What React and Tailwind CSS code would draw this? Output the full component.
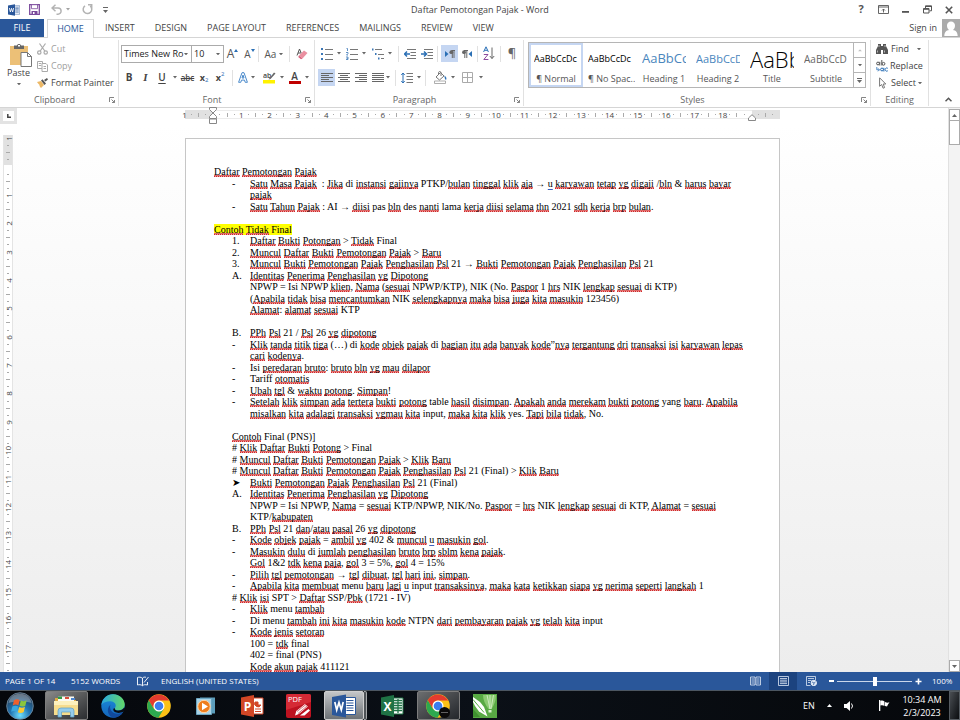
import { Fragment, useState } from 'react';

const TABS = ['INSERT', 'DESIGN', 'PAGE LAYOUT', 'REFERENCES', 'MAILINGS', 'REVIEW', 'VIEW'];

const STYLES = [
    { name: '¶ Normal', sample: 'AaBbCcDc', look: 'text-[9px] text-black' },
    { name: '¶ No Spac...', sample: 'AaBbCcDc', look: 'text-[9px] text-black' },
    { name: 'Heading 1', sample: 'AaBbCc', look: 'text-[13px] text-[#4a86bd]' },
    { name: 'Heading 2', sample: 'AaBbCcD', look: 'text-[11px] text-[#4a86bd]' },
    { name: 'Title', sample: 'AaBb', look: 'text-[22px] text-black font-light' },
    { name: 'Subtitle', sample: 'AaBbCcD', look: 'text-[10px] text-[#666]' },
];

// [marker, text] - marker null means plain text on the margin, '' means a continuation line
const LINES = [
    [null, 'Daftar Pemotongan Pajak'],
    ['-', 'Satu Masa Pajak  : Jika di instansi gajinya PTKP/bulan tinggal klik aja → u karyawan tetap yg digaji /bln & harus bayar'],
    ['', 'pajak'],
    ['-', 'Satu Tahun Pajak : AI → diisi pas bln des nanti lama kerja diisi selama thn 2021 sdh kerja brp bulan.'],
    [null, ''],
    ['mark', 'Contoh Tidak Final'],
    ['1.', 'Daftar Bukti Potongan > Tidak Final'],
    ['2.', 'Muncul Daftar Bukti Pemotongan Pajak > Baru'],
    ['3.', 'Muncul Bukti Pemotongan Pajak Penghasilan Psl 21 → Bukti Pemotongan Pajak Penghasilan Psl 21'],
    ['A.', 'Identitas Penerima Penghasilan yg Dipotong'],
    ['', 'NPWP = Isi NPWP klien, Nama (sesuai NPWP/KTP), NIK (No. Paspor 1 hrs NIK lengkap sesuai di KTP)'],
    ['', '(Apabila tidak bisa mencantumkan NIK selengkapnya maka bisa juga kita masukin 123456)'],
    ['', 'Alamat: alamat sesuai KTP'],
    [null, ''],
    ['B.', 'PPh Psl 21 / Psl 26 yg dipotong'],
    ['-', 'Klik tanda titik tiga (…) di kode objek pajak di bagian itu ada banyak kode”nya tergantung dri transaksi isi karyawan lepas'],
    ['', 'cari kodenya.'],
    ['-', 'Isi peredaran bruto: bruto bln yg mau dilapor'],
    ['-', 'Tariff otomatis'],
    ['-', 'Ubah tgl & waktu potong. Simpan!'],
    ['-', 'Setelah klik simpan ada tertera bukti potong table hasil disimpan. Apakah anda merekam bukti potong yang baru. Apabila'],
    ['', 'misalkan kita adalagi transaksi ygmau kita input, maka kita klik yes. Tapi bila tidak, No.'],
    [null, ''],
    ['#', 'Contoh Final (PNS)]'],
    ['#', '# Klik Daftar Bukti Potong > Final'],
    ['#', '# Muncul Daftar Bukti Pemotongan Pajak > Klik Baru'],
    ['#', '# Muncul Daftar Bukti Pemotongan Pajak Penghasilan Psl 21 (Final) > Klik Baru'],
    ['➤', 'Bukti Pemotongan Pajak Penghasilan Psl 21 (Final)'],
    ['A.', 'Identitas Penerima Penghasilan yg Dipotong'],
    ['', 'NPWP = Isi NPWP, Nama = sesuai KTP/NPWP, NIK/No. Paspor = hrs NIK lengkap sesuai di KTP, Alamat = sesuai'],
    ['', 'KTP/kabupaten'],
    ['B.', 'PPh Psl 21 dan/atau pasal 26 yg dipotong'],
    ['-', 'Kode objek pajak = ambil yg 402 & muncul u masukin gol.'],
    ['-', 'Masukin dulu di jumlah penghasilan bruto brp sblm kena pajak.'],
    ['', 'Gol 1&2 tdk kena paja, gol 3 = 5%, gol 4 = 15%'],
    ['-', 'Pilih tgl pemotongan → tgl dibuat, tgl hari ini, simpan.'],
    ['-', 'Apabila kita membuat menu baru lagi u input transaksinya, maka kata ketikkan siapa yg nerima seperti langkah 1'],
    ['#', '# Klik isi SPT > Daftar SSP/Pbk (1721 - IV)'],
    ['-', 'Klik menu tambah'],
    ['-', 'Di menu tambah ini kita masukin kode NTPN dari pembayaran pajak yg telah kita input'],
    ['-', 'Kode jenis setoran'],
    ['', '100 = tdk final'],
    ['', '402 = final (PNS)'],
    ['', 'Kode akun pajak 411121'],
];

// words the proofing dictionary accepts
const KNOWN = new Set(['di', 'Di', 'PTKP', 'AI', 'pas', 'des', 'lama', 'Final', 'final', 'NPWP', 'KTP', 'NIK', 'No', 'Isi', 'Tariff', 'table', 'yang', 'input', 'yes', 'PNS', 'menu', 'SPT', 'SSP', 'IV', 'NTPN']);

function Proofed({ text }) {
    return text.split(/([A-Za-z]+)/).map((part, i) => {
        if (i % 2 === 0 || KNOWN.has(part)) return <Fragment key={i}>{part}</Fragment>;
        if (part === 'u') return <span key={i} className="underline decoration-[#3a5fc0] underline-offset-2">u</span>;
        return (
            <span key={i} className="bg-[repeating-linear-gradient(90deg,#d02828_0px,#d02828_1px,#eba0a0_1px,#eba0a0_2px),linear-gradient(#de6464,#de6464)] bg-[length:100%_1px,100%_1px] bg-[position:0_100%,0_calc(100%-1px)] bg-no-repeat">{part}</span>
        );
    });
}

function Line({ marker, text }) {
    if (marker === 'mark') {
        return <p className="even:pt-px"><mark className="bg-[#ffff00] text-black"><Proofed text={text} /></mark></p>;
    }
    if (marker === null) return <p className="min-h-[11px] even:min-h-3 even:pt-px"><Proofed text={text} /></p>;
    if (marker === '#') return <p className="pl-[18px] even:pt-px"><Proofed text={text} /></p>;
    return (
        <p className="flex pl-[18px] even:pt-px">
            <span className="w-[18px] shrink-0">{marker}</span>
            <span><Proofed text={text} /></span>
        </p>
    );
}

function Caret({ className = 'w-[5px]' }) {
    return (
        <svg viewBox="0 0 5 3" className={`shrink-0 ${className}`} fill="#666"><path d="M0 0h5L2.500 3z" /></svg>
    );
}

function Sep() {
    return <span className="h-4 w-px shrink-0 bg-[#e1e1e1]" />;
}

function Tool({ label, w = 'w-[17px]', active, children }) {
    return (
        <button type="button" aria-label={label} className={`flex h-[17px] shrink-0 items-center justify-center ${w} ${active ? 'bg-[#c5d6f2]' : 'hover:bg-[#e3ecf9]'}`}>
            {children}
        </button>
    );
}

function Rows({ rows, color = '#666' }) {
    return (
        <svg viewBox="0 0 12 11" className="h-[11px] w-3" stroke={color} strokeWidth="1">
            {rows.map(([a, b], i) => <path key={i} d={`M${a} ${i * 2 + 1.5}H${b}`} />)}
        </svg>
    );
}

function Group({ title, launcher = true, className, children }) {
    return (
        <section className={`flex shrink-0 flex-col border-r border-[#e1e1e1] ${className}`}>
            <div className="flex-1">{children}</div>
            <div className="flex h-[13px] items-center">
                <span className="flex-1 text-center text-[#666]">{title}</span>
                {launcher && (
                    <button type="button" aria-label={`${title} options`} className="mr-[3px] w-[6px]">
                        <svg viewBox="0 0 6 6" className="size-[6px]" fill="none" stroke="#777"><path d="M.5 5V.5H5M2.500 2.500l3 3M5.500 3v2.500H3" strokeWidth=".9" /></svg>
                    </button>
                )}
            </div>
        </section>
    );
}

function TitleBar() {
    return (
        <header className="flex h-[19px] items-center bg-white">
            <div className="flex w-40 items-center pl-2">
                <WordLogo className="size-3" />
                <button type="button" aria-label="Save" className="ml-[9px]">
                    <svg viewBox="0 0 11 11" className="size-[11px]"><path d="M.7.7h9.600v9.600H.7z" fill="#fff" stroke="#7b4a9c" strokeWidth="1.300" /><path d="M2.500.7h6v4h-6z" fill="#fff" stroke="#7b4a9c" strokeWidth=".8" /><path d="M2.500 7h6v3.500h-6z" fill="#7b4a9c" /><path d="M4 8h1.500v2H4z" fill="#fff" /></svg>
                </button>
                <button type="button" aria-label="Undo" className="ml-[11px] flex items-center gap-1">
                    <svg viewBox="0 0 11 11" className="size-[11px]" fill="none" stroke="#b3b3b3" strokeWidth="1.500"><path d="M4.500.8L1 4l3.500 3.200M1.200 4H7a3 3 0 0 1 0 6.200H5.500" /></svg>
                    <Caret className="w-1 opacity-60" />
                </button>
                <button type="button" aria-label="Redo" className="ml-3">
                    <svg viewBox="0 0 11 11" className="size-[11px]" fill="none" stroke="#b3b3b3" strokeWidth="1.500"><path d="M3 1.800A4.300 4.300 0 1 0 8.200 2M6 .8h3.700v3.700" /></svg>
                </button>
                <button type="button" aria-label="Customize Quick Access Toolbar" className="ml-[10px]">
                    <svg viewBox="0 0 5 6" className="h-[6px] w-[5px]" fill="#666"><path d="M0 0h5v1H0zM0 3h5L2.500 6z" /></svg>
                </button>
            </div>
            <h1 className="flex-1 pt-px text-center text-[9px]">Daftar Pemotongan Pajak - Word</h1>
            <div className="flex w-40 justify-end text-[#555]">
                <button type="button" aria-label="Help" className="w-[22px] text-[11px] font-bold">?</button>
                <button type="button" aria-label="Ribbon Display Options" className="flex w-[22px] items-center justify-center">
                    <svg viewBox="0 0 11 9" className="h-[9px] w-[11px]" fill="none" stroke="#555"><path d="M.5.5h10v8H.5zM.5 2h10M5.500 7.500V4M4 5.500L5.500 4 7 5.500" strokeWidth=".9" /></svg>
                </button>
                <button type="button" aria-label="Minimize" className="flex w-[22px] items-center justify-center">
                    <svg viewBox="0 0 8 8" className="size-2" fill="#555"><path d="M1 5h7v1.800H1z" /></svg>
                </button>
                <button type="button" aria-label="Restore" className="flex w-[22px] items-center justify-center">
                    <svg viewBox="0 0 9 9" className="size-[9px]" fill="none" stroke="#555"><path d="M.5 3.500h5.500v4.500H.5zM.5 4.300H6M2.500 3V.8h6v5H6.500M2.500 1.500h6" /></svg>
                </button>
                <button type="button" aria-label="Close" className="flex w-[22px] items-center justify-center">
                    <svg viewBox="0 0 8 8" className="size-2" stroke="#555" strokeWidth="1.600"><path d="M.8.8l6.400 6.400M7.200.8L.8 7.200" /></svg>
                </button>
            </div>
        </header>
    );
}

function TabBar() {
    return (
        <nav className="flex h-[19px] items-stretch border-b border-[#d5d5d5] bg-white text-[9px]">
            <button type="button" className="w-11 bg-[#2a579a] text-white">FILE</button>
            <button type="button" className="-mb-px ml-[3px] mr-px w-[47px] border border-b-0 border-[#d5d5d5] bg-white text-[#2a579a]">HOME</button>
            {TABS.map(tab => (
                <button key={tab} type="button" className="px-[10px] hover:text-[#2a579a]">{tab}</button>
            ))}
            <a href="#signin" className="ml-auto flex items-center gap-[5px]">
                Sign in
                <svg viewBox="0 0 18 18" className="size-[18px]"><path d="M0 0h18v18H0z" fill="#ababab" /><path d="M9 2.500a4 4 0 0 1 4 4.200c0 2-1.200 3.800-2.200 4.300 3.200.4 4.700 2 4.900 6H2.300c.2-4 1.700-5.600 4.900-6C6.200 10.500 5 8.700 5 6.700A4 4 0 0 1 9 2.500z" fill="#fff" /></svg>
            </a>
        </nav>
    );
}

function Clipboard() {
    return (
        <Group title="Clipboard" className="w-[119px]">
            <div className="flex pt-[3px]">
                <button type="button" className="flex w-[37px] flex-col items-center">
                    <svg viewBox="0 0 22 24" className="ml-1 h-6 w-[22px]">
                        <path d="M0 3h18v19H0z" fill="#ecc077" /><path d="M4 2.500h3C7.300.5 10.700.5 11 2.500h3V6H4z" fill="#666" /><path d="M8 2h2v1.500H8z" fill="#fff" />
                        <path d="M11 9.500h6.500l4 4V23.500H11z" fill="#fff" stroke="#777" /><path d="M17.500 9.500v4h4" fill="none" stroke="#777" />
                    </svg>
                    <span className="leading-3">Paste</span>
                    <span className="flex h-[10px] items-center"><Caret className="w-1" /></span>
                </button>
                <div className="flex flex-col gap-[5px] text-[#444]">
                    <button type="button" className="flex h-3 items-center gap-[3px] text-[#a0a0a0]">
                        <svg viewBox="0 0 11 12" className="h-3 w-[11px]" fill="none" stroke="#aaa" strokeWidth="1.200"><path d="M2.500.5L7.800 8M8.500.5L3.200 8" /><circle cx="2.300" cy="9.500" r="1.700" /><circle cx="8.700" cy="9.500" r="1.700" /></svg>
                        Cut
                    </button>
                    <button type="button" className="flex h-3 items-center gap-[3px] text-[#a0a0a0]">
                        <svg viewBox="0 0 11 11" className="size-[11px]" fill="#fff" stroke="#aaa"><path d="M.5.500h5v7h-5zM1.800 2.500h2.500M1.800 4.500h2.500" /><path d="M5 2.500h4l1.500 1.500v6.500H5zM6.500 5.500h2.500M6.500 7.500h2.500" /></svg>
                        Copy
                    </button>
                    <button type="button" className="flex h-3 items-center gap-[3px]">
                        <svg viewBox="0 0 11 10" className="h-[10px] w-[11px]"><path d="M0 4l4-1 3 4-3 3c-1-1-1.500-2-1.800-3.500L1.500 6z" fill="#ecb866" /><path d="M4 2.500l1.500-1.200L9 5.500 7.500 7zM7 2l3-2 1 1.500-2.500 2z" fill="#555" /></svg>
                        Format Painter
                    </button>
                </div>
            </div>
        </Group>
    );
}

function Combo({ label, value, options, onChange, w }) {
    return (
        <label className={`relative flex h-[18px] items-center border border-[#ababab] ${w}`}>
            <select aria-label={label} value={value} onChange={e => onChange(e.target.value)} className="h-full w-full appearance-none bg-white pl-[2px] text-[9px] text-[#222] outline-none">
                {options.map(o => <option key={o}>{o}</option>)}
            </select>
            <span className="pointer-events-none absolute right-[3px]"><Caret className="w-1" /></span>
        </label>
    );
}

function FontGroup() {
    const [font, setFont] = useState('Times New Ro');
    const [size, setSize] = useState('10');

    return (
        <Group title="Font" className="w-[196px]">
            <div className="flex items-center pl-[2px] pt-[5px]">
                <Combo label="Font" w="w-[71px]" value={font} options={['Times New Ro', 'Calibri', 'Arial']} onChange={setFont} />
                <Combo label="Font size" w="-ml-px w-[33px]" value={size} options={['8', '9', '10', '11', '12']} onChange={setSize} />
                <Tool label="Grow font"><span className="text-[12px] text-[#555]">A</span><svg viewBox="0 0 4 3" className="mb-2 w-1" fill="#2a6fb5"><path d="M0 3h4L2 0z" /></svg></Tool>
                <Tool label="Shrink font"><span className="text-[10px] text-[#555]">A</span><svg viewBox="0 0 4 3" className="mb-2 w-1" fill="#2a6fb5"><path d="M0 0h4L2 3z" /></svg></Tool>
                <Sep />
                <Tool label="Change case" w="w-[30px]"><span className="mr-[3px] text-[10px] text-[#555]">Aa</span><Caret className="w-1" /></Tool>
                <Sep />
                <Tool label="Clear formatting" w="w-6">
                    <svg viewBox="0 0 12 12" className="size-3"><path d="M1 7.500L3.500 1l1.700 4M2 5h3" fill="none" stroke="#555" /><path d="M3 7.500L8 2.500l3.500 2.500-5 5.500z" fill="#ea8fa0" /><path d="M3 7.500l3.500 3-1.500.7L2.200 9z" fill="#d6607a" /></svg>
                </Tool>
            </div>
            <div className="flex items-center pl-[2px] pt-[6px] text-[#444]">
                <Tool label="Bold" w="w-4"><b className="text-[10px]">B</b></Tool>
                <Tool label="Italic"><i className="font-['Liberation_Serif',serif] text-[11px] font-bold">I</i></Tool>
                <Tool label="Underline" w="w-4"><span className="text-[10px] font-semibold underline underline-offset-2">U</span></Tool>
                <Tool label="Underline style" w="w-[9px]"><Caret className="w-1" /></Tool>
                <Tool label="Strikethrough"><span className="text-[8px] font-semibold line-through">abc</span></Tool>
                <Tool label="Subscript" w="w-4"><b className="text-[9px]">x</b><span className="mt-[6px] text-[6px] text-[#2a6fb5]">2</span></Tool>
                <Tool label="Superscript" w="w-4"><b className="text-[9px]">x</b><span className="mb-[6px] text-[6px] text-[#2a6fb5]">2</span></Tool>
                <span className="w-1" />
                <Sep />
                <Tool label="Text effects" w="w-[27px]">
                    <svg viewBox="0 0 10 11" className="mr-[3px] h-[11px] w-[10px]" fill="#fff" stroke="#4a8acb" strokeWidth="1"><path d="M.6 10.300L4 .7h2l3.400 9.600H7.200l-.7-2.200h-3l-.7 2.200zM4 6h2L5 3z" /></svg>
                    <Caret className="w-1" />
                </Tool>
                <Tool label="Highlight" w="w-[26px]">
                    <svg viewBox="0 0 13 13" className="mr-1 size-[13px]"><path d="M0 9h12v3.500H0z" fill="#fff200" /><text x="0" y="7" fontSize="7" fontWeight="600" fill="#444">ab</text><path d="M5.500 8.500L11 1.500l1.500 1L7.500 8z" fill="#666" /></svg>
                    <Caret className="w-1" />
                </Tool>
                <Tool label="Font color" w="w-[25px]">
                    <span className="mr-1 w-3 border-b-[3px] border-[#c00000] text-center text-[10px] font-semibold leading-[10px]">A</span>
                    <Caret className="w-1" />
                </Tool>
            </div>
        </Group>
    );
}

function ListIcon({ kind }) {
    return (
        <svg viewBox="0 0 12 12" className="mr-1 size-3" strokeWidth="1">
            {kind === 'bullet' && <path d="M0 0h2v2H0zM0 5h2v2H0zM0 10h2v2H0z" fill="#3b77b7" />}
            {kind === 'number' && <path d="M.5.500H1.500V3M0 4.500h2v1L.5 7H2M0 9h2v2.500H0M.5 10.300H2" fill="none" stroke="#3b77b7" strokeWidth=".8" />}
            {kind === 'multi' ? (
                <><path d="M0 1.500h1.500M3 6h1.500M6 10.500h1.500" stroke="#3b77b7" strokeWidth="2" /><path d="M3 1.500h7M6 6.500h6M9 10.500h3" stroke="#777" /></>
            ) : (
                <path d="M4 1.500h8M4 6.500h8M4 11.500h8" stroke="#777" />
            )}
        </svg>
    );
}

function IndentIcon({ flip }) {
    return (
        <svg viewBox="0 0 12 10" className="h-[10px] w-3" fill="none">
            <path d="M3 .5h9M6.500 3.500H12M6.500 6.500H12M3 9.500h9" stroke="#777" />
            <path d={flip ? 'M0 5h5M3 2.500L5.500 5 3 7.500' : 'M1 5h5M3 2.500L.5 5 3 7.500'} stroke="#2a6fb5" strokeWidth="1.500" />
        </svg>
    );
}

function ParagraphGroup() {
    return (
        <Group title="Paragraph" className="w-[209px]">
            <div className="flex items-center pl-[3px] pt-[5px]">
                <Tool label="Bullets" w="w-[25px]"><ListIcon kind="bullet" /><Caret className="w-1" /></Tool>
                <Tool label="Numbering" w="w-[26px]"><ListIcon kind="number" /><Caret className="w-1" /></Tool>
                <Tool label="Multilevel list" w="w-[25px]"><ListIcon kind="multi" /><Caret className="w-1" /></Tool>
                <span className="w-1" />
                <Sep />
                <span className="w-[2px]" />
                <Tool label="Decrease indent"><IndentIcon /></Tool>
                <Tool label="Increase indent"><IndentIcon flip /></Tool>
                <span className="w-[2px]" />
                <Sep />
                <span className="w-[3px]" />
                <Tool label="Left-to-right" active><svg viewBox="0 0 10 8" className="h-2 w-[10px]"><path d="M0 1l3.500 3L0 7z" fill="#2a6fb5" /><path d="M6.500.5H10M7.300 0v8M9 0v8" stroke="#666" /><circle cx="6.300" cy="2.200" r="1.900" fill="#666" /></svg></Tool>
                <Tool label="Right-to-left"><svg viewBox="0 0 10 8" className="h-2 w-[10px]"><path d="M10 1L6.500 4 10 7z" fill="#2a6fb5" /><path d="M2 .5h4M2.800 0v8M4.800 0v8" stroke="#666" /><circle cx="2" cy="2.200" r="1.900" fill="#666" /></svg></Tool>
                <span className="w-[2px]" />
                <Sep />
                <Tool label="Sort" w="w-[22px]">
                    <svg viewBox="0 0 12 15" className="h-[15px] w-3" fill="none">
                        <path d="M.6 6L3 .8 5.400 6M1.500 4.300h3" stroke="#2a6fb5" />
                        <path d="M.8 8.500h4.200L.8 13.500H5.400" stroke="#8b4a9c" />
                        <path d="M9 1.500v11M6.800 10L9 12.500l2.200-2.500" stroke="#666" />
                    </svg>
                </Tool>
                <Sep />
                <Tool label="Show paragraph marks" w="w-[22px]"><span className="text-[13px] text-[#666]">¶</span></Tool>
            </div>
            <div className="flex items-center pl-[3px] pt-[7px]">
                <Tool label="Align left" active><Rows rows={[[0, 12], [0, 8], [0, 12], [0, 8], [0, 12]]} /></Tool>
                <Tool label="Center"><Rows rows={[[0, 12], [2, 10], [0, 12], [2, 10], [0, 12]]} /></Tool>
                <Tool label="Align right"><Rows rows={[[0, 12], [4, 12], [0, 12], [4, 12], [0, 12]]} /></Tool>
                <Tool label="Justify"><Rows rows={[[0, 12], [0, 12], [0, 12], [0, 12], [0, 12]]} /></Tool>
                <Caret className="w-1" />
                <span className="w-[5px]" />
                <Sep />
                <Tool label="Line spacing" w="w-[29px]">
                    <svg viewBox="0 0 12 12" className="mr-1 size-3" fill="none"><path d="M5.500 1.500H12M5.500 4.500H12M5.500 7.500H12M5.500 10.500H12" stroke="#777" /><path d="M2 1v10M.3 3L2 1l1.700 2M.3 9L2 11l1.700-2" stroke="#2a6fb5" /></svg>
                    <Caret className="w-1" />
                </Tool>
                <Sep />
                <span className="w-[3px]" />
                <Tool label="Shading" w="w-[31px]">
                    <svg viewBox="0 0 13 13" className="mr-1 size-[13px]" fill="none"><path d="M2 6l4.500-4.500L10 5 5.500 9z" fill="#fff" stroke="#777" /><path d="M4.500 4V1.500a1.300 1.300 0 0 1 2.500 0V5" stroke="#777" /><path d="M10.500 4.500c2 1.500 2.300 3 1.500 4.500-1-.5-1.500-2-1.500-4.500z" fill="#2a6fb5" /><path d="M.5 10h11v2.500H.5z" fill="#fff" stroke="#999" strokeWidth=".8" /></svg>
                    <Caret className="w-1" />
                </Tool>
                <Tool label="Borders" w="w-6">
                    <svg viewBox="0 0 11 11" className="mr-[6px] size-[11px]" fill="none" stroke="#aaa"><path d="M.5.500h10v10H.5zM5.500.5v10M.5 5.500h10" /></svg>
                    <Caret className="w-1" />
                </Tool>
            </div>
        </Group>
    );
}

function StylesGroup() {
    return (
        <Group title="Styles" className="w-[347px]">
            <div className="ml-1 mr-[4px] mt-[2px] flex h-[46px] border border-[#b5b5b5]">
                {STYLES.map((s, i) => (
                    <button key={s.name} type="button" className={`flex min-w-0 flex-1 flex-col overflow-hidden border-2 px-[3px] ${i === 0 ? 'border-[#c5d6f2]' : 'border-transparent'}`}>
                        <span className={`flex h-7 w-full items-center overflow-hidden whitespace-nowrap ${s.look}`}>{s.sample}</span>
                        <span className="w-full whitespace-nowrap text-center leading-[11px] text-[#555]">{s.name}</span>
                    </button>
                ))}
                <div className="flex w-[12px] flex-col divide-y divide-[#b5b5b5] border-l border-[#b5b5b5]">
                    <button type="button" aria-label="Previous styles" className="flex flex-1 items-center justify-center"><Caret className="w-1 rotate-180 opacity-40" /></button>
                    <button type="button" aria-label="Next styles" className="flex flex-1 items-center justify-center"><Caret className="w-1" /></button>
                    <button type="button" aria-label="More styles" className="flex flex-1 flex-col items-center justify-center gap-px"><span className="h-px w-[5px] bg-[#666]" /><Caret className="w-[5px]" /></button>
                </div>
            </div>
        </Group>
    );
}

function EditingGroup() {
    return (
        <Group title="Editing" launcher={false} className="w-[58px]">
            <div className="flex flex-col gap-[5px] pl-[5px] pt-[3px]">
                <button type="button" className="flex h-3 items-center gap-[3px]">
                    <svg viewBox="0 0 12 10" className="h-[10px] w-3" fill="#555"><path d="M2 0h3v2h2V0h3v2l2 4v4H7V6H5v4H0V6l2-4z" /><path d="M1.500 6.500v2M8.500 6.500v2M3 1v2M9 1v2" stroke="#ddd" strokeWidth=".7" /></svg>
                    Find
                    <span className="ml-[5px]"><Caret className="w-1" /></span>
                </button>
                <button type="button" className="flex h-3 items-center gap-[2px]">
                    <svg viewBox="0 0 12 12" className="size-3" fill="none">
                        <g stroke="#555"><circle cx="2" cy="3.500" r="1.400" /><path d="M3.800 1.800v3.700M5.800 0v5.500" /><circle cx="7.500" cy="3.800" r="1.400" /></g>
                        <g stroke="#2a6fb5"><circle cx="6" cy="9.500" r="1.400" /><path d="M7.900 7.800v3.700M11.800 8.300a1.600 1.600 0 1 0 0 2.500" /><path d="M.8 7v2.800h2.500M2 8.300l1.500 1.500L2 11.300" strokeWidth=".8" /></g>
                    </svg>
                    Replace
                </button>
                <button type="button" className="flex h-3 items-center gap-[4px] pl-[3px]">
                    <svg viewBox="0 0 8 12" className="h-3 w-2" fill="#fff" stroke="#777"><path d="M.6.8v8.500l2-1.800 1.500 3.700 1.500-.6L4.200 7h2.600z" /></svg>
                    <span className="flex items-center gap-[2px]">Select<Caret className="w-1" /></span>
                </button>
            </div>
        </Group>
    );
}

// one centimetre: the number and three ticks
function Centimetre({ label, vertical }) {
    return (
        <div className={`flex min-h-0 min-w-0 flex-1 ${vertical ? 'flex-col' : ''}`}>
            <span className="flex min-h-0 min-w-0 flex-1 items-center justify-center whitespace-nowrap">
                <span className={vertical ? '-rotate-90' : ''}>{label}</span>
            </span>
            {['short', 'long', 'dot'].map((tick, i) => (
                <span key={tick} className="flex min-h-0 flex-1 items-center justify-center">
                    <i className={`bg-[#aaa] ${vertical ? (i === 1 ? 'h-px w-1' : 'h-px w-[2px]') : (i === 1 ? 'h-1 w-px' : 'h-px w-px')}`} />
                </span>
            ))}
        </div>
    );
}

function HorizontalRuler() {
    return (
        <div className="flex h-4 shrink-0">
            <button type="button" aria-label="Tab selector" className="flex w-[17px] items-center justify-center border-[3px] border-[#e3e3e3] bg-white">
                <svg viewBox="0 0 4 4" className="size-1" fill="none" stroke="#444" strokeWidth="1.500"><path d="M.8 0v3.200H4" /></svg>
            </button>
            <div className="relative mx-auto flex h-[13px] w-[595px] items-center">
                <div className="absolute inset-x-0 top-[2px] flex h-[9px]">
                    <span className="w-7 bg-[#e1e1e1]" /><span className="flex-1 border-y border-[#ececec] bg-white" /><span className="w-7 bg-[#e1e1e1]" />
                </div>
                <div className="relative -ml-1 flex w-full text-[8px] leading-[9px]">
                    {Array.from({ length: 21 }, (_, i) => (
                        <Centimetre key={i} label={i === 0 ? '1' : i === 1 || i === 20 ? '' : i - 1} />
                    ))}
                </div>
                <svg viewBox="0 0 8 17" className="absolute left-6 -top-px h-[17px] w-2" fill="#fff" stroke="#888"><path d="M.5.500h7v2L4 6 .5 2.500zM4 6l3.500 3.500v2h-7v-2zM.5 12h7v4.500h-7z" /></svg>
                <svg viewBox="0 0 8 7" className="absolute right-6 top-[6px] h-[7px] w-2" fill="#fff" stroke="#888"><path d="M4 .7L7.500 4v2.500h-7V4z" /></svg>
            </div>
            <span className="w-3 bg-white" />
        </div>
    );
}

function Workspace() {
    return (
        <main className="flex min-h-0 flex-1 flex-col bg-white">
            <div className="flex min-h-0 flex-1">
                <div className="flex min-w-0 flex-1 flex-col">
                    <HorizontalRuler />
                    <div className="flex min-h-0 flex-1 bg-linear-to-b from-white to-[#ededed]">
                        <div className="w-[17px] shrink-0 overflow-hidden pl-[3px] pt-[13px]">
                            <div className="relative h-[540px] w-[10px] border-x border-[#e4e4e4] bg-white text-[8px] leading-[9px]">
                                <div className="absolute inset-x-0 top-0 h-[30px] bg-[#e1e1e1]" />
                                <div className="relative -mt-[2px] flex h-[539px] flex-col">
                                    {Array.from({ length: 19 }, (_, i) => (
                                        <Centimetre key={i} vertical label={i === 0 ? '1' : i === 1 ? '' : i - 1} />
                                    ))}
                                </div>
                            </div>
                        </div>
                        <div className="min-w-0 flex-1 overflow-hidden pr-3 pt-[14px]">
                            <article className="mx-auto h-[842px] w-[595px] whitespace-pre border border-[#c6c6c6] bg-white pl-7 pt-[27px] font-['Liberation_Serif','DejaVu_Sans',serif] text-[10px] leading-[11px] text-black">
                                {LINES.map(([marker, text], i) => <Line key={i} marker={marker} text={text} />)}
                            </article>
                        </div>
                    </div>
                </div>
                <div className="-ml-3 flex w-3 shrink-0 flex-col border-l border-[#e1e1e1] bg-[#f3f3f3]">
                    <button type="button" aria-label="Scroll up" className="mt-[1px] flex h-3 items-center justify-center border border-[#ababab] bg-white"><Caret className="w-[5px] rotate-180" /></button>
                    <div className="h-6 border border-t-0 border-[#ababab] bg-white" />
                    <button type="button" aria-label="Scroll down" className="mt-auto flex h-3 items-center justify-center border border-[#ababab] bg-white"><Caret className="w-[5px]" /></button>
                </div>
            </div>
        </main>
    );
}

function StatusBar() {
    const [zoom, setZoom] = useState(100);

    return (
        <footer className="flex h-[18px] shrink-0 items-center bg-[#2a579a] pl-[5px] text-[8px] text-white">
            <span className="w-[66px]">PAGE 1 OF 14</span>
            <span className="w-[66px]">5152 WORDS</span>
            <svg viewBox="0 0 12 11" className="mr-3 h-[11px] w-3" fill="none" stroke="#fff"><path d="M5 2C4 1 2 1 .5 1.500v7.500C2 8.500 4 8.500 5.500 9.700V2C6.500 1 8 1 9 1.300M5.500 9.700C7 8.500 8 8.500 10.500 9M7 6.500L11.500 1M10.500 6v3" strokeWidth=".9" /></svg>
            <span>ENGLISH (UNITED STATES)</span>
            <div className="ml-auto flex h-full items-center">
                <button type="button" aria-label="Read Mode" className="flex h-full w-7 items-center justify-center">
                    <svg viewBox="0 0 11 10" className="h-[10px] w-[11px]" fill="none" stroke="#dfe8f5"><path d="M.5 1h4.500v8H.5zM6 1h4.500v8H6zM1.500 3h2.500M1.500 5h2.500M1.500 7h2.500M7 3h2.500M7 5h2.500M7 7h2.500" strokeWidth=".8" /></svg>
                </button>
                <button type="button" aria-label="Print Layout" className="flex h-full w-7 items-center justify-center bg-[#1c437f]">
                    <svg viewBox="0 0 11 10" className="h-[10px] w-[11px]" fill="none" stroke="#dfe8f5"><path d="M.5.500h10v9H.5zM2 2.500h7M2 4.200h7M2 5.900h7M2 7.600h7" strokeWidth=".8" /></svg>
                </button>
                <button type="button" aria-label="Web Layout" className="flex h-full w-7 items-center justify-center">
                    <svg viewBox="0 0 11 10" className="h-[10px] w-[11px]" fill="none" stroke="#dfe8f5"><path d="M9.500 4V.500h-9v9h4M2 2.500h6M2 4.500h3.500M2 6.500h2" strokeWidth=".8" /><circle cx="7.800" cy="7" r="2.700" fill="#dfe8f5" /><path d="M6 6l2 1 1.500-1M7.500 9l.5-2" stroke="#2a579a" strokeWidth=".7" /></svg>
                </button>
                <button type="button" aria-label="Zoom out" className="flex w-3 justify-center"><i className="h-[2px] w-[5px] bg-white" /></button>
                <input
                    type="range"
                    aria-label="Zoom"
                    min="10"
                    max="190"
                    value={zoom}
                    onChange={e => setZoom(Number(e.target.value))}
                    className="h-[10px] w-[75px] appearance-none bg-[linear-gradient(#c9d6ea,#c9d6ea)] bg-[length:100%_1px] bg-center bg-no-repeat [&::-webkit-slider-thumb]:h-[9px] [&::-webkit-slider-thumb]:w-1 [&::-webkit-slider-thumb]:appearance-none [&::-webkit-slider-thumb]:bg-white"
                />
                <button type="button" aria-label="Zoom in" className="flex w-3 justify-center">
                    <svg viewBox="0 0 7 7" className="size-[7px]" stroke="#fff" strokeWidth="1.600"><path d="M.5 3.500h6M3.500.5v6" /></svg>
                </button>
                <span className="w-9 pl-2">{zoom}%</span>
            </div>
        </footer>
    );
}

function WordLogo({ className }) {
    return (
        <svg viewBox="0 0 24 24" className={className}>
            <path d="M13 3.500h10.500v17H13z" fill="#fff" stroke="#2a579a" /><path d="M14.500 6.500h7M14.500 9h7M14.500 11.500h7M14.500 14h7M14.500 16.500h7" stroke="#2a579a" strokeWidth="1.200" />
            <path d="M0 3L14 .500v23L0 21z" fill="#2a579a" /><path d="M2.800 8l1.900 8L7 8.500 9.300 16l1.900-8" fill="none" stroke="#fff" strokeWidth="1.700" />
        </svg>
    );
}

function ChromeIcon({ badge }) {
    return (
        <svg viewBox="0 0 24 24" className="size-6">
            <circle cx="12" cy="12" r="11.800" fill="#fbc116" />
            <path d="M1.800 6.100A11.800 11.800 0 0 0 11.500 23.800L16.800 14.800 12 17.500 7 15z" fill="#2da94f" />
            <path d="M1.800 6.100A11.800 11.800 0 0 1 22.200 6.600H12a5.400 5.400 0 0 0-5.300 4.500L6.300 14z" fill="#e33b2e" />
            <circle cx="12" cy="12" r="5.500" fill="#fff" /><circle cx="12" cy="12" r="4.300" fill="#3b7ded" />
            {badge && <><circle cx="18.500" cy="18.500" r="5.500" fill="#0b0b0b" /><path d="M15 18.500h7" stroke="#777" strokeWidth=".8" /></>}
        </svg>
    );
}

function StartOrb() {
    return (
        <svg viewBox="0 0 28 28" className="size-7">
            <defs>
                <radialGradient id="orb" cx="50%" cy="85%" r="80%"><stop offset="0" stopColor="#6fe0ff" /><stop offset=".45" stopColor="#2277b5" /><stop offset="1" stopColor="#27394f" /></radialGradient>
            </defs>
            <circle cx="14" cy="14" r="13.300" fill="url(#orb)" stroke="#7993a8" strokeWidth=".8" />
            <path d="M2.500 11C4 4 9 1.800 14 1.800S24 4 25.500 11C19 8.500 9 8.500 2.500 11z" fill="#fff" opacity=".3" />
            <path d="M8 8.200c2-1.300 3.800-1.200 5.700-.2l-1.300 5.300c-2-1-3.700-1-5.700.1z" fill="#f0602d" /><path d="M14.800 8.500c2 1 3.700 1 5.900-.2l-1.400 5.400c-2 1.200-3.900 1-5.800 0z" fill="#8cc63c" />
            <path d="M6.400 14.600c2-1.200 3.800-1 5.700-.1l-1.300 5.200c-2-1-3.700-1-5.700.1z" fill="#3ba7e0" /><path d="M13.200 15c2 1 3.800 1 5.800-.2l-1.300 5.300c-2 1.200-3.900 1-5.800.1z" fill="#fdc930" />
        </svg>
    );
}

function ExplorerIcon() {
    return (
        <svg viewBox="0 0 26 24" className="h-6 w-[26px]">
            <path d="M2 4h8l1.500 2H23v15H2z" fill="#dca944" /><path d="M5 2.500h16v6H5z" fill="#fbfbf4" /><path d="M5 2.500h4V5H5z" fill="#2e9b46" /><path d="M12 3h4v2h-4z" fill="#d94c38" /><path d="M18 4h4v2h-4z" fill="#4e86cf" />
            <path d="M1 7h24v14H1z" fill="#f6dc8d" /><path d="M1 7h24v4H1z" fill="#fcf0bd" />
            <path d="M5 23v-6q0-3 3-3h10q3 0 3 3v6h-3.500v-5h-9v5z" fill="#95cdec" stroke="#5a9dc7" strokeWidth=".7" />
        </svg>
    );
}

function EdgeIcon() {
    return (
        <svg viewBox="0 0 24 24" className="size-6">
            <defs>
                <linearGradient id="edge-top" x1="0" x2="1"><stop offset="0" stopColor="#2aa8e0" /><stop offset="1" stopColor="#63d868" /></linearGradient>
                <linearGradient id="edge-low" x1="0" x2="0" y1="0" y2="1"><stop offset="0" stopColor="#1b8fdd" /><stop offset="1" stopColor="#1464b9" /></linearGradient>
            </defs>
            <circle cx="12" cy="12" r="11.700" fill="url(#edge-low)" />
            <path d="M.4 11C1.500 4 6.500.3 12 .3c7 0 11.700 5.200 11.700 10 0 4-3 6.200-6.200 6.200-3 0-4.300-1.200-3.500-2.500 2-3-.2-6.500-4.500-6.700C5.500 7.200 2 8.500.4 11z" fill="url(#edge-top)" />
            <path d="M9.500 10.500c-2 5 2.500 10.500 9 9 1.800-.4 3-1.300 3.800-1.700-2 3.600-5.600 5.800-9.300 5.900-6-1-8.500-8.500-3.500-13.200z" fill="#11499c" />
            <path d="M14 14c-.8 1.300.5 2.500 3.500 2.500 2.500 0 4.500-1 5.700-3l1.200 1.500-2 2.800c-5 2.400-11 .7-10-3z" fill="#090d13" />
        </svg>
    );
}

function OfficeIcon({ letter, color }) {
    return (
        <svg viewBox="0 0 24 24" className="size-6">
            <path d="M12 4h11v16H12z" fill="#fff" stroke={color} />
            {letter === 'P' ? <path d="M15 8h3v3h3a3 3 0 1 1-6-3zM15 15h6M15 17.500h6" fill={color} stroke={color} /> : <path d="M14 6.500h8M14 9h8M14 11.500h8M14 14h8M14 16.500h8M18 5v14" stroke={color} strokeWidth="1.300" />}
            <path d="M1 3.500L14 1v22L1 20.500z" fill={color} />
            <text x="7.500" y="16.500" textAnchor="middle" fontSize="12" fontWeight="700" fill="#fff">{letter}</text>
        </svg>
    );
}

const APPS = [
    { name: 'File Explorer', frame: 'border border-[#7d7d7d] bg-linear-to-br from-[#8a8a8a] to-[#2b2d30]', icon: <ExplorerIcon /> },
    { name: 'Microsoft Edge', icon: <EdgeIcon /> },
    { name: 'Google Chrome', icon: <ChromeIcon /> },
    {
        name: 'Media Player',
        icon: <svg viewBox="0 0 22 22" className="size-[22px]"><path d="M5 2.500h15v16H5z" fill="#5c9dbb" /><path d="M1.500 3.500h15v16h-15z" fill="#a9d3e6" stroke="#6aa5c2" /><circle cx="9" cy="11.500" r="6.200" fill="#ee7d1c" stroke="#ffd3a3" /><path d="M7 7.700v7.600l6-3.800z" fill="#fff" /></svg>,
    },
    { name: 'PowerPoint', icon: <OfficeIcon letter="P" color="#d24726" /> },
    {
        name: 'PDF Editor',
        icon: <svg viewBox="0 0 25 24" className="h-6 w-[25px]"><rect width="25" height="24" rx="2" fill="#bd1220" /><path d="M0 2q0-2 2-2h21q2 0 2 2v6L0 16z" fill="#d52a35" /><text x="2" y="8" fontSize="7.500" fill="#fff">PDF</text><path d="M9 21.500l1.300-4.500L19 10l2.800 2.500-9 7.500zM14 21.500l8.500-6.500 1.500 1.500-5.500 5z" fill="#fff" /><path d="M11 17.500L20 10.500M12 19.500l9-7.500" stroke="#bd1220" strokeWidth=".6" /></svg>,
    },
    { name: 'Word', frame: 'border border-[#cfcfcf] bg-linear-to-b from-[#c4c6c8] to-[#6d7276]', icon: <WordLogo className="size-6" />, stacked: true },
    { name: 'Excel', icon: <OfficeIcon letter="X" color="#1f7245" /> },
    { name: 'Chrome window', frame: 'border border-[#7d7d7d] bg-linear-to-br from-[#6c6e70] to-[#24272b]', icon: <ChromeIcon badge /> },
    {
        name: 'CorelDRAW',
        icon: <svg viewBox="0 0 24 24" className="size-6"><path d="M0 0h24v24H0z" fill="#58a944" /><path d="M10 1h13c0 6-2 10-4.500 14h-3C12 10 10 6 10 1z" fill="#8ccb72" /><path d="M14 1l3 14M17 1v14M20.500 1L18 15" stroke="#d9f0cf" strokeWidth=".8" /><path d="M15.500 16h3v2.500h-3z" fill="#d9f0cf" /><path d="M0 3l7 5 4 5 3.500 9.500L6 17.500 2 12 0 8z" fill="#fff" /><path d="M0 5.500l11 13" stroke="#58a944" /><path d="M0 15l7 8H0z" fill="#3f9130" /></svg>,
    },
];

function Taskbar() {
    return (
        <div className="flex h-[30px] shrink-0 items-stretch border-t border-[#4c5661] bg-linear-to-r from-[#05070b] via-[#0b1017] to-[#06080b] text-white">
            <button type="button" aria-label="Start" className="flex w-[43px] items-center pl-[6px]"><StartOrb /></button>
            <nav className="grid w-[465px] grid-cols-10">
                {APPS.map(app => (
                    <div key={app.name} className="flex px-[2px]">
                        <button type="button" aria-label={app.name} className={`flex flex-1 items-center justify-center rounded-[2px] ${app.frame ?? ''}`}>{app.icon}</button>
                        {app.stacked && <span className="w-[3px] rounded-r-[2px] border border-l-0 border-[#a5a8aa] bg-[#4e5357]" />}
                    </div>
                ))}
            </nav>
            <div className="ml-auto flex items-center">
                <span className="w-6 text-[9px]">EN</span>
                <svg viewBox="0 0 5 3" className="w-[5px]" fill="#fff"><path d="M0 3h5L2.500 0z" /></svg>
                <svg viewBox="0 0 10 10" className="ml-3 size-[10px]" fill="#fff"><path d="M0 3h2.500L6 0v10L2.500 7H0z" /><path d="M7.500 2.500q2 2.500 0 5" fill="none" stroke="#fff" /></svg>
                <svg viewBox="0 0 11 11" className="ml-[25px] mr-[5px] size-[11px]" fill="#fff"><path d="M0 0h1.300v11H0zM1.500 1C3 .3 4 .5 5.500 1.500v4.500C4 5 3 5 1.500 5.500zM6 2c2 1 3 .8 4.500.3L9 4.500 8 6.500 6 6z" /></svg>
                <div className="w-[54px] text-center text-[9px] leading-[13px]">
                    <p>10:34 AM</p>
                    <p>2/3/2023</p>
                </div>
                <button type="button" aria-label="Show desktop" className="h-full w-[11px] border border-[#555b61] bg-linear-to-br from-[#4b4f54] to-[#0b0d10]" />
            </div>
        </div>
    );
}

export default function App() {
    return (
        <div className="flex h-screen flex-col overflow-hidden bg-white font-['Open_Sans','Noto_Sans',sans-serif] text-[9px] text-[#444]">
            <TitleBar />
            <TabBar />
            <div className="flex h-[70px] shrink-0 items-stretch border-b border-[#d5d5d5] bg-white pb-px pt-[2px]">
                <Clipboard />
                <FontGroup />
                <ParagraphGroup />
                <StylesGroup />
                <EditingGroup />
                <button type="button" aria-label="Collapse the ribbon" className="ml-auto mr-2 mb-1 self-end">
                    <svg viewBox="0 0 7 5" className="w-[7px]" fill="none" stroke="#555" strokeWidth="1.500"><path d="M.5 4.300l3-3 3 3" /></svg>
                </button>
            </div>
            <Workspace />
            <StatusBar />
            <Taskbar />
        </div>
    );
}
